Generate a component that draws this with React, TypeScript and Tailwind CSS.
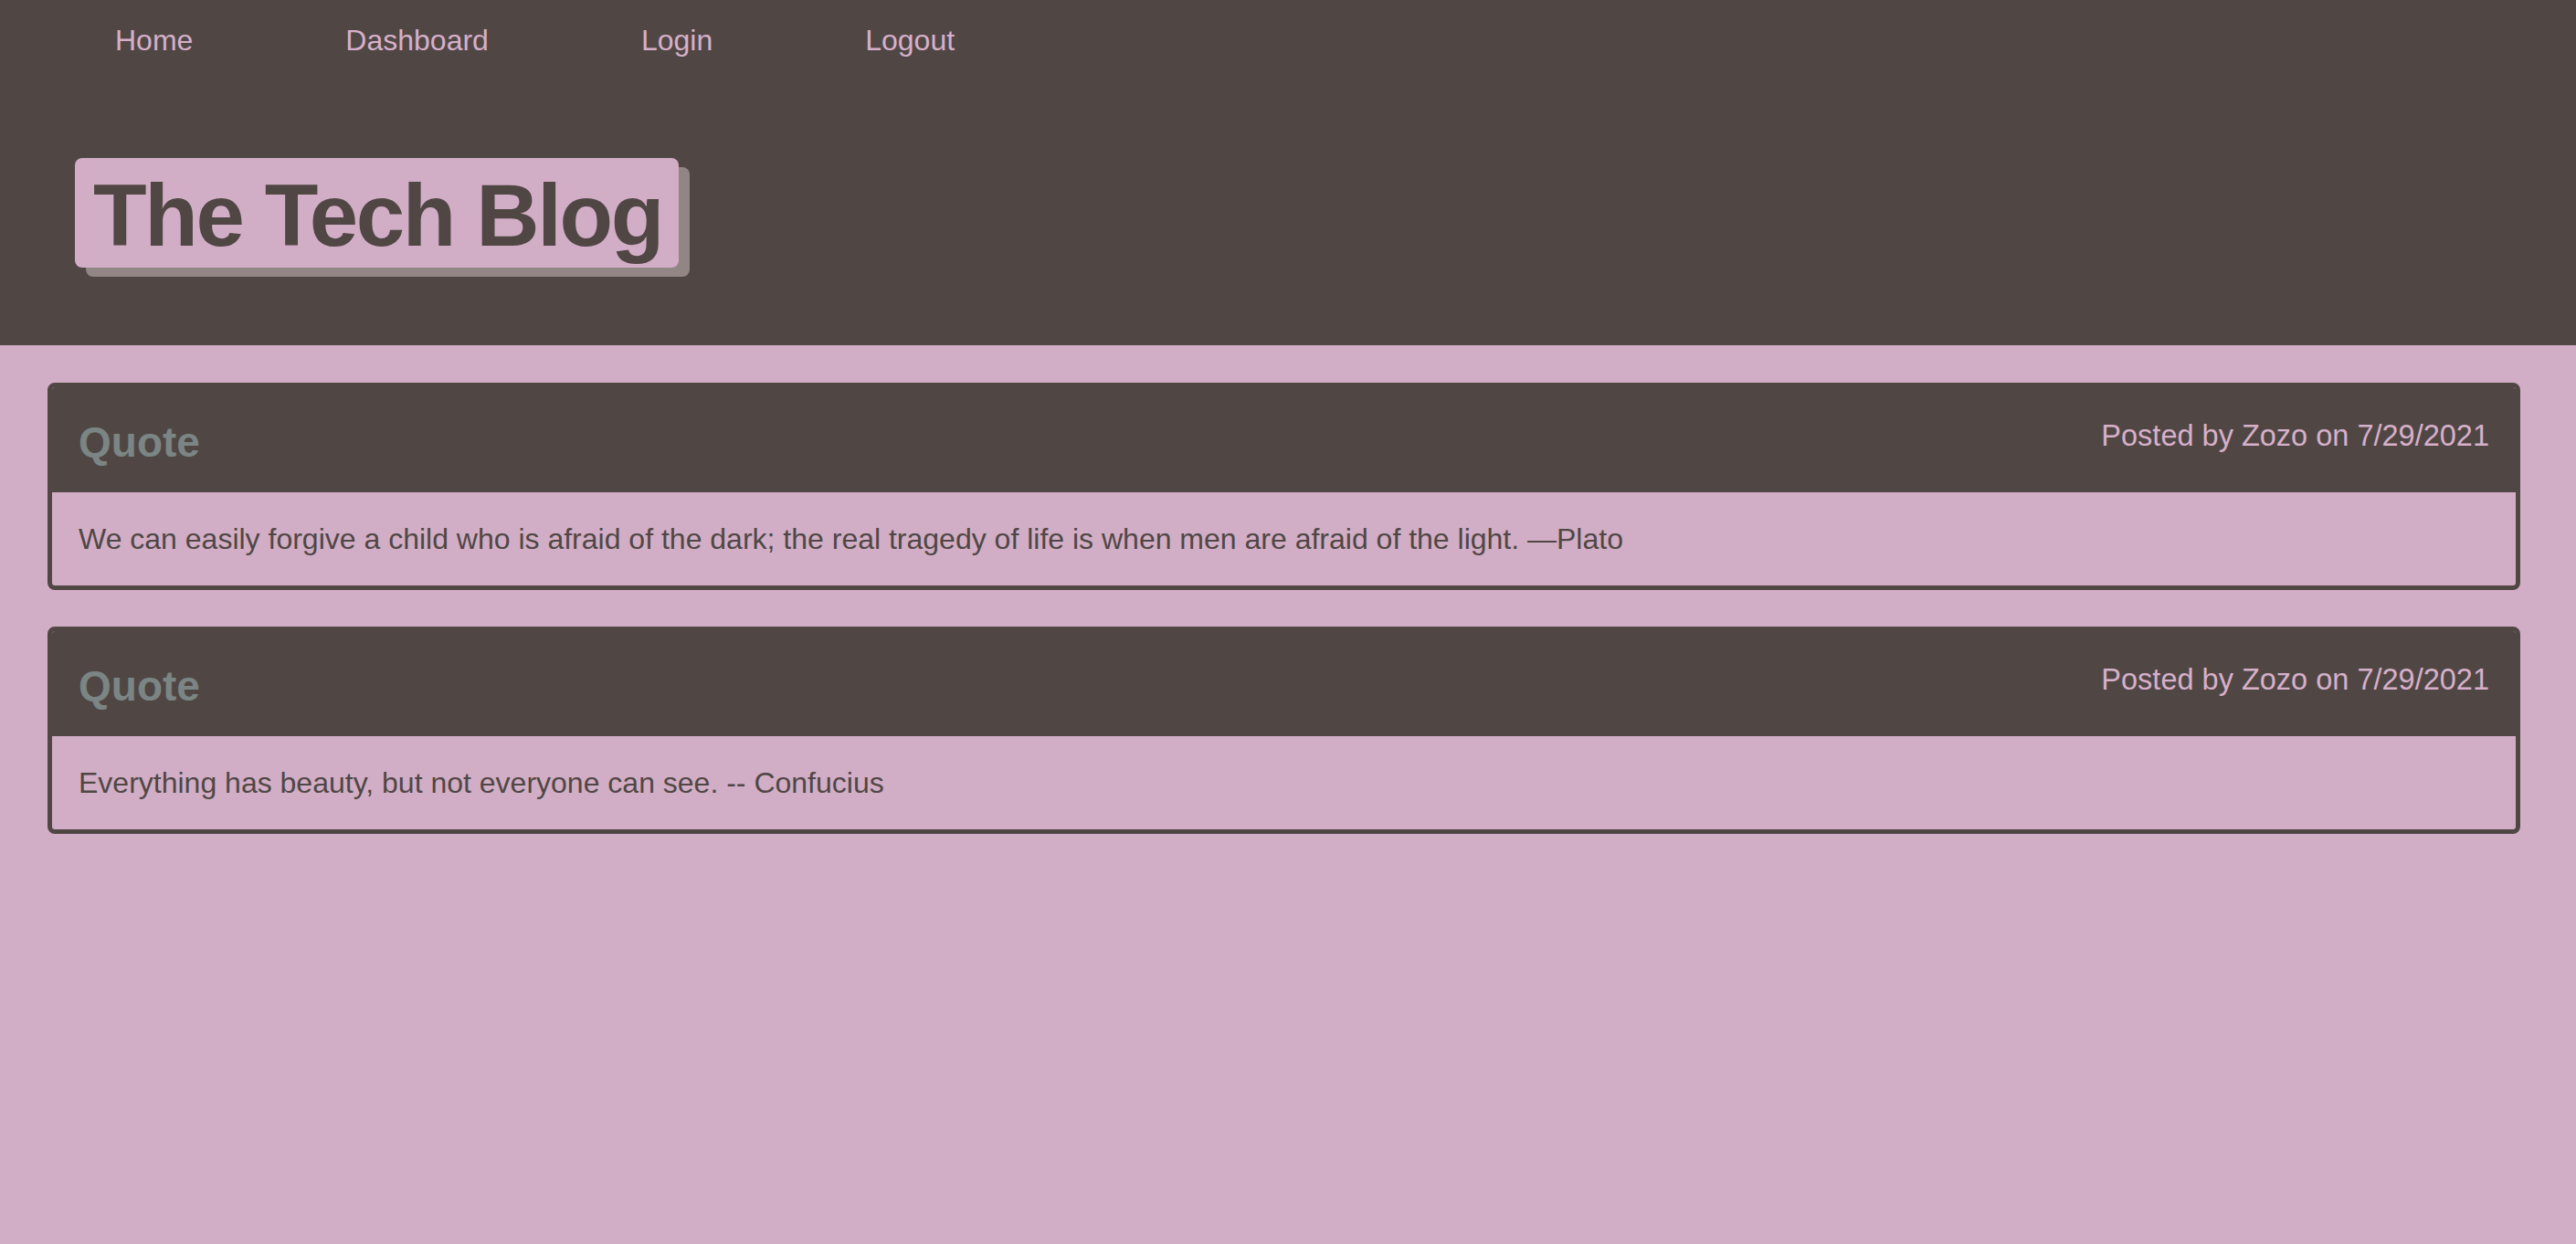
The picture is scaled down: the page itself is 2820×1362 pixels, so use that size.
import React from "react";

const posts = [
  {
    title: "Quote",
    author: "Zozo",
    date: "7/29/2021",
    body: "We can easily forgive a child who is afraid of the dark; the real tragedy of life is when men are afraid of the light. \u2014Plato",
  },
  {
    title: "Quote",
    author: "Zozo",
    date: "7/29/2021",
    body: "Everything has beauty, but not everyone can see. -- Confucius",
  },
];

const links = ["Home", "Dashboard", "Login", "Logout"];

export default function App() {
  return (
    <div className="min-h-screen bg-[#d2aec6] font-['Liberation_Sans',Arial,sans-serif] text-[#504745]">
      <header className="flex h-[378px] flex-col bg-[#504745]">
        <nav className="flex gap-[167px] pl-[126px] pt-[28px]">
          {links.map((l) => (
            <a key={l} href="#" className="text-[32px] leading-none text-[#d6b0c9]">
              {l}
            </a>
          ))}
        </nav>
        <div className="ml-[82px] mt-[113px] self-start">
          <h1 className="w-[661px] rounded-[8px] bg-[#d2aec6] pb-[9px] pl-[20px] pt-[15px] text-[96px] font-bold leading-none tracking-[-2.4px] whitespace-nowrap text-[#504745] shadow-[12px_10px_0_#928684]">
            The Tech Blog
          </h1>
        </div>
      </header>
      <main className="flex flex-col gap-[40px] pl-[52px] pr-[61px] pt-[41px]">
        {posts.map((p, i) => (
          <article key={i} className="overflow-hidden rounded-[8px] border-[5px] border-[#504745]">
            <div className="flex h-[115px] items-start justify-between bg-[#504745] px-[29px] pt-[37px]">
              <h2 className="text-[46px] font-bold leading-none text-[#7b8584]">{p.title}</h2>
              <span className="text-[32.5px] leading-none text-[#d6b0c9]">
                Posted by {p.author} on {p.date}
              </span>
            </div>
            <div className="flex h-[102px] items-center px-[29px]">
              <p className="text-[32px] leading-none">{p.body}</p>
            </div>
          </article>
        ))}
      </main>
    </div>
  );
}
